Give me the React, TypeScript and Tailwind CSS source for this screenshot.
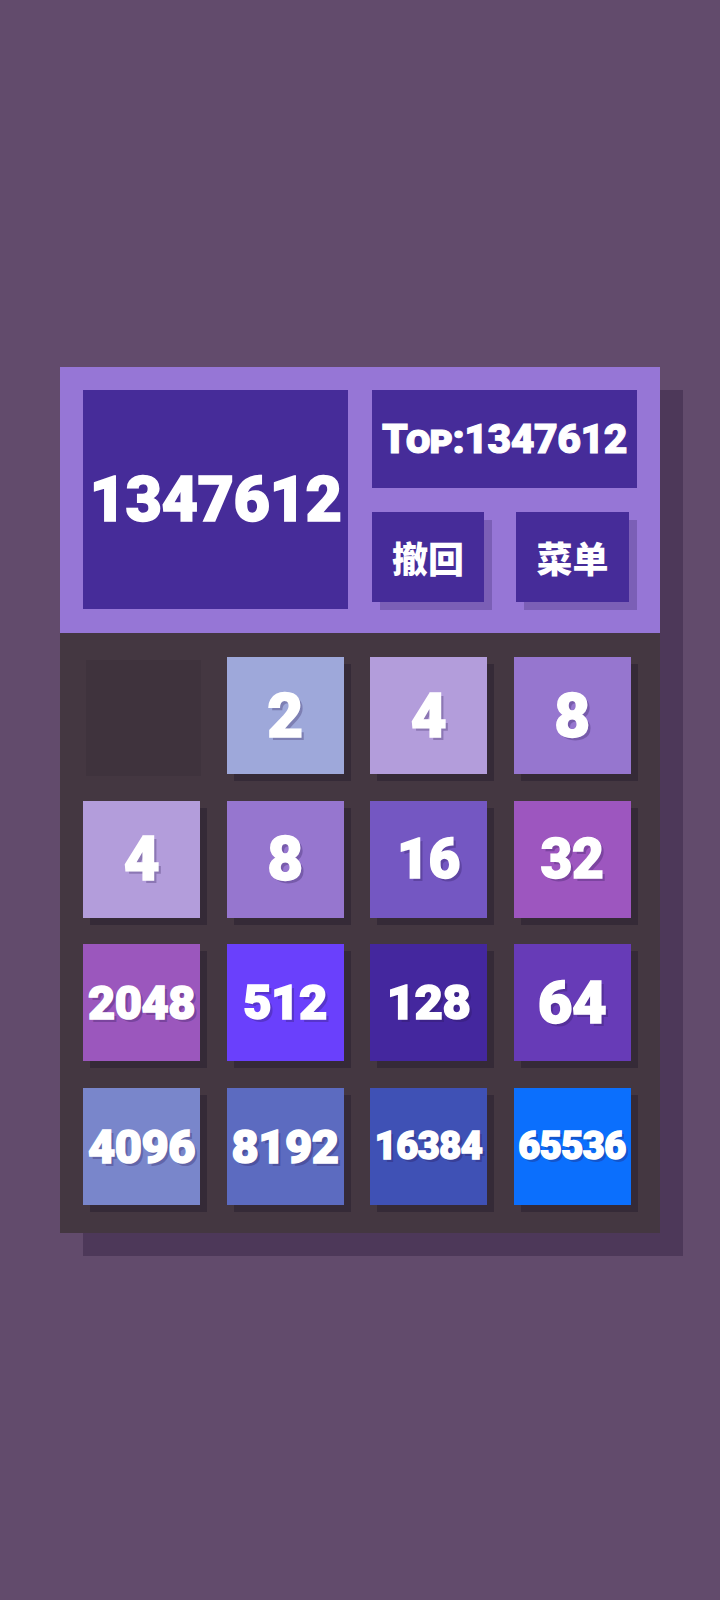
import React from "react";

type Tile = { value: number | null; bg: string; size: string };

const tiles: Tile[] = [
  { value: null, bg: "", size: "" },
  { value: 2, bg: "bg-[#9ea8da]", size: "text-[62px]" },
  { value: 4, bg: "bg-[#b39ddb]", size: "text-[62px]" },
  { value: 8, bg: "bg-[#9676cf]", size: "text-[62px]" },
  { value: 4, bg: "bg-[#b39ddb]", size: "text-[62px]" },
  { value: 8, bg: "bg-[#9676cf]", size: "text-[62px]" },
  { value: 16, bg: "bg-[#7457c2]", size: "text-[55px]" },
  { value: 32, bg: "bg-[#9d56bf]", size: "text-[55px]" },
  { value: 2048, bg: "bg-[#9b57bd]", size: "text-[47px]" },
  { value: 512, bg: "bg-[#6a40fc]", size: "text-[49px]" },
  { value: 128, bg: "bg-[#44279e]", size: "text-[49px]" },
  { value: 64, bg: "bg-[#673bb7]", size: "text-[60px]" },
  { value: 4096, bg: "bg-[#7986cb]", size: "text-[47px]" },
  { value: 8192, bg: "bg-[#5c6bc0]", size: "text-[47px]" },
  { value: 16384, bg: "bg-[#3f51b5]", size: "text-[38px]" },
  { value: 65536, bg: "bg-[#0b6ffd]", size: "text-[38px]" },
];

const font = "font-['Roboto','Liberation_Sans','Noto_Sans_CJK_SC',sans-serif]";

export default function App() {
  return (
    <div className={`h-[1600px] w-full bg-[#624b6c] flex items-center justify-center ${font}`}>
      <div className="w-[600px] flex flex-col shadow-[23px_23px_0_#4d3859]">
        {/* header */}
        <div className="h-[266px] bg-[#9676d6] pl-[23px] pt-[23px] flex items-start gap-[24px]">
          <div className="w-[265px] h-[219px] bg-[#462c99] flex items-center justify-center text-white text-[63px] font-black tracking-[-0.5px] leading-none [-webkit-text-stroke:1.5px_white]">
            1347612
          </div>
          <div className="w-[265px] flex flex-col gap-[24px]">
            <div className="h-[98px] bg-[#462c99] flex items-center justify-center text-white text-[41px] font-black leading-none [font-variant-caps:small-caps] tracking-[-0.5px] [-webkit-text-stroke:1px_white]">
              Top:1347612
            </div>
            <div className="flex gap-[32px]">
              <button className="w-[112px] h-[90px] bg-[#462c99] shadow-[8px_8px_0_#7b5fb6] text-white text-[36px] font-black font-['Noto_Sans_CJK_SC',sans-serif] flex items-center justify-center">
                撤回
              </button>
              <button className="w-[113px] h-[90px] bg-[#462c99] shadow-[8px_8px_0_#7b5fb6] text-white text-[36px] font-black font-['Noto_Sans_CJK_SC',sans-serif] flex items-center justify-center">
                菜单
              </button>
            </div>
          </div>
        </div>
        {/* board */}
        <div className="h-[600px] bg-[#443741] pl-[23px] pt-[24px]">
          <div className="grid grid-cols-[repeat(4,117px)] auto-rows-[117px] gap-[26.5px]">
            {tiles.map((t, i) =>
              t.value === null ? (
                <div key={i} className="ml-[3px] mt-[3px] w-[115px] h-[116px] bg-[#3f333d]" />
              ) : (
                <div
                  key={i}
                  className={`${t.bg} ${t.size} shadow-[7px_7px_0_#352a37] flex items-center justify-center text-white font-black leading-none tracking-[-0.5px] [-webkit-text-stroke:1.5px_white] [text-shadow:3px_3px_0_rgba(40,20,80,0.28)]`}
                >
                  {t.value}
                </div>
              )
            )}
          </div>
        </div>
      </div>
    </div>
  );
}
